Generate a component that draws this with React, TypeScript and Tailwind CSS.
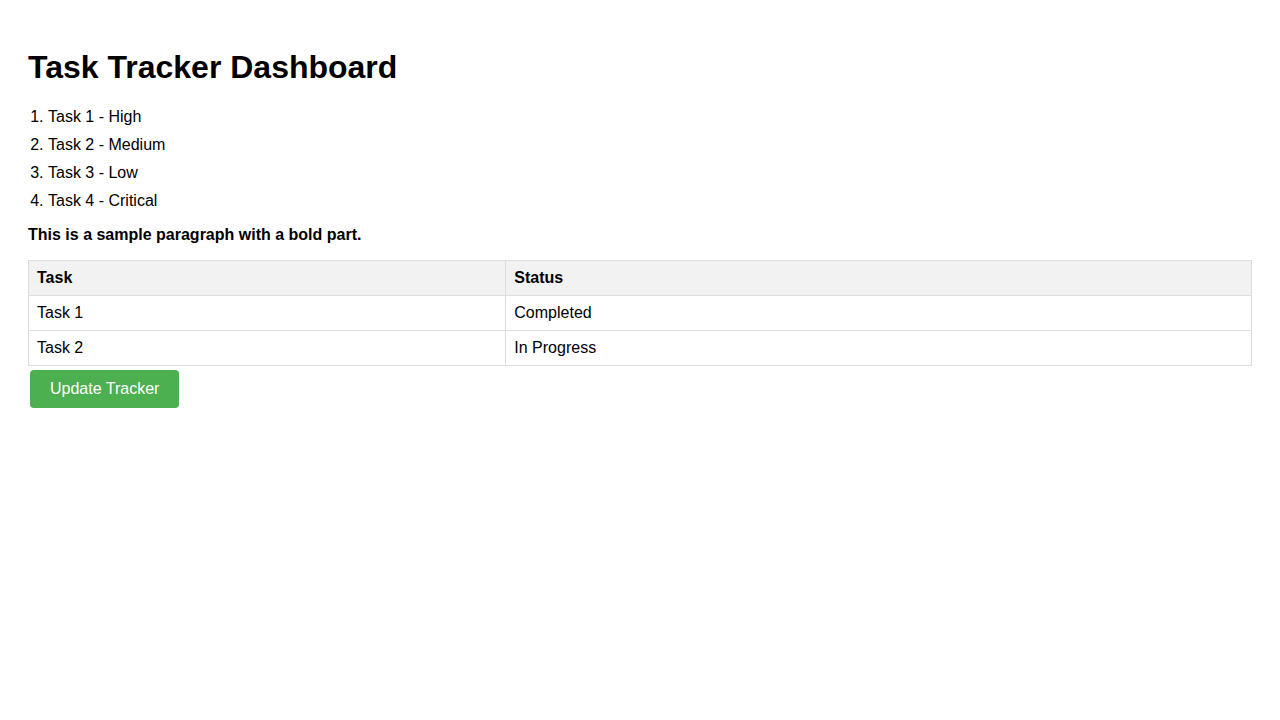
const tasks = ['Task 1 - High', 'Task 2 - Medium', 'Task 3 - Low', 'Task 4 - Critical']

const rows = [
	{ task: 'Task 1', status: 'Completed' },
	{ task: 'Task 2', status: 'In Progress' }
]

export default function App() {
	return (
		<div className="min-h-screen bg-white px-[28px] pt-[49px] text-black font-['Liberation_Sans',Arial,sans-serif]">
			<h1 className="text-[32px] font-bold leading-[37px]">Task Tracker Dashboard</h1>

			<ol className="mt-[17px] list-decimal pl-[20px] text-[16px]">
				{tasks.map(t => (
					<li key={t} className="leading-[28px]">
						{t}
					</li>
				))}
			</ol>

			<p className="mt-[10px] text-[16px] font-bold leading-[19px]">
				This is a sample paragraph with a bold part.
			</p>

			<table className="mt-[16px] w-full border-collapse text-[16px] leading-[18px]">
				<thead>
					<tr className="bg-[#f2f2f2]">
						<th className="border border-[#dddddd] px-[8px] py-[8px] text-left font-bold">Task</th>
						<th className="border border-[#dddddd] px-[8px] py-[8px] text-left font-bold">Status</th>
					</tr>
				</thead>
				<tbody>
					{rows.map(r => (
						<tr key={r.task}>
							<td className="border border-[#dddddd] px-[8px] py-[8px]">{r.task}</td>
							<td className="border border-[#dddddd] px-[8px] py-[8px]">{r.status}</td>
						</tr>
					))}
				</tbody>
			</table>

			<button className="mx-[2px] mt-[4px] rounded-[4px] bg-[#4caf50] px-[20px] py-[10px] text-[16px] leading-[18px] text-white">
				Update Tracker
			</button>
		</div>
	)
}
